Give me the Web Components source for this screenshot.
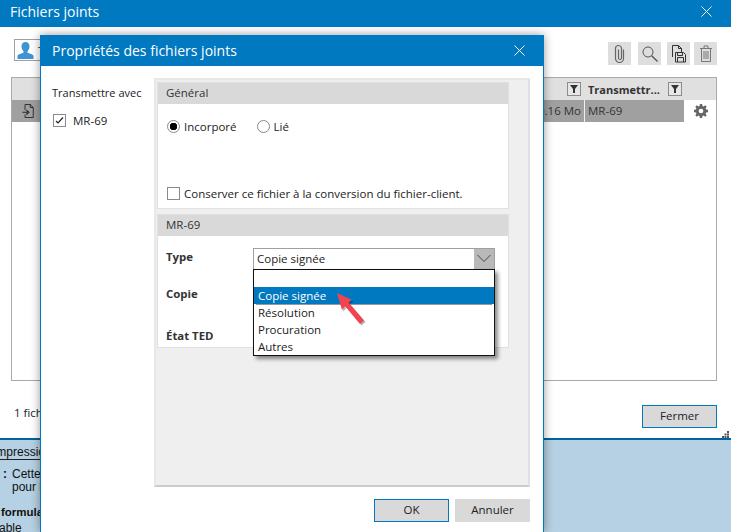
<!DOCTYPE html>
<html lang="fr">
<head>
<meta charset="utf-8">
<title>Fichiers joints</title>
<style>
html, body { margin: 0; height: 100%; }
body {
    position: relative;
    width: 731px;
    height: 532px;
    overflow: hidden;
    background: #b6d1e3;
    font-family: "Open Sans", "Noto Sans", sans-serif;
    font-size: 11.5px;
    color: #222;
}
</style>
</head>
<body>
<back-page></back-page>
<files-window></files-window>
<props-dialog></props-dialog>

<script>
const html = (strings, ...values) => String.raw({ raw: strings }, ...values)

const closeIcon = html`<svg width="11" height="11" viewBox="0 0 11 11"><path d="M.5.5l10 10M10.500.5l-10 10" stroke="#fff" stroke-width="1" fill="none"/></svg>`
const funnel = html`<svg width="8" height="8" viewBox="0 0 8 8"><path d="M0 0h8L5 4v4H3V4z" fill="#333"/></svg>`

function define(name, markup) {
    customElements.define(name, class extends HTMLElement {
        constructor() {
            super()
            const template = document.createElement('template')
            template.innerHTML = markup
            this.attachShadow({ mode: 'open' }).append(template.content.cloneNode(true))
        }
    })
}

// page that lies behind the two windows, only its left strip is visible
define('back-page', html`
    <style>
    :host { position: absolute; left: 0; top: 440px; width: 731px; height: 92px; overflow: hidden;
        font-family: "Liberation Sans", Arial, sans-serif; font-size: 12px; color: #111; }
    .wrap { margin-left: -13px; display: flex; flex-direction: column; }
    .head { height: 19px; line-height: 24px; border-bottom: 1px solid #222; width: 60px; padding-left: 6px; white-space: nowrap; overflow: hidden; }
    .note { display: flex; margin-top: 8px; line-height: 13px; padding-left: 16px; }
    .note b { width: 9px; }
    .bold { font-weight: bold; margin-top: 10px; padding-left: 14px; font-size: 11.5px; line-height: 16px; }
    .last { margin-left: -20px; margin-top: 2px; line-height: 13px; }
    </style>
    <div class="wrap">
        <div class="head">Impression</div>
        <div class="note"><b>:</b><span>Cette<br>pour l</span></div>
        <div class="bold">formulaire</div>
        <div class="last">Modifiable</div>
    </div>
`)

define('flat-button', html`
    <style>
    :host { display: block; box-sizing: border-box; width: 75px; height: 23px; background: #d9d9d9;
        border: 1px solid #d9d9d9; text-align: center; line-height: 20px; font-size: 11.5px; color: #222; }
    :host([primary]) { border-color: #0079c1; }
    </style>
    <slot></slot>
`)

define('tool-button', html`
    <style>
    :host { display: flex; width: 23px; height: 23px; background: #dedede; align-items: center; justify-content: center; }
    </style>
    <slot></slot>
`)

define('check-box', html`
    <style>
    :host { display: flex; align-items: center; gap: 7px; font-size: 11.5px; }
    i { box-sizing: border-box; width: 13px; height: 13px; border: 1px solid #8a8a8a; display: block; background: #fff; flex: none; }
    svg { display: none; margin: 1px; }
    :host([checked]) svg { display: block; }
    </style>
    <i><svg width="9" height="9" viewBox="0 0 9 9"><path d="M1 5l2 2 5-5.500" fill="none" stroke="#222" stroke-width="1.200"/></svg></i>
    <slot></slot>
`)

define('radio-button', html`
    <style>
    :host { display: flex; align-items: center; gap: 4px; font-size: 11.5px; }
    i { box-sizing: border-box; width: 13px; height: 13px; border: 1px solid #8a8a8a; border-radius: 50%; background: #fff; display: block; flex: none; }
    :host([checked]) i { background: radial-gradient(circle, #000 0 3.500px, #fff 4px); }
    </style>
    <i></i>
    <slot></slot>
`)

define('prop-section', html`
    <style>
    :host { display: block; background: #fff; box-shadow: 0 0 0 1px #e0e0e0; }
    h3 { margin: 0; height: 21px; background: #d9d9d9; font-weight: 400; font-size: 11.5px; line-height: 19px; padding-left: 8px; color: #333; }
    </style>
    <h3><slot name="title"></slot></h3>
    <slot></slot>
`)

define('combo-list', html`
    <style>
    :host { display: block; position: relative; box-sizing: border-box; height: 22px; border: 1px solid #a0a0a0; background: #fff; font-size: 11.5px; line-height: 19px; }
    .val { padding-left: 3px; }
    .btn { position: absolute; right: 0; top: 0; bottom: 0; width: 20px; background: #b9b9b9; }
    .btn svg { display: block; margin: 5px 0 0 3px; }
    ul { position: absolute; left: -1px; right: -1px; top: 20px; margin: 0; padding: 0; list-style: none; background: #fff;
        border: 1px solid #111; box-shadow: 3px 3px 4px rgba(0,0,0,.45); z-index: 2; }
    li { height: 17px; line-height: 15px; padding-left: 4px; }
    li:last-child { height: 16px; }
    li.on { background: #0079c1; color: #fff; line-height: 17px; }
    li.rule { height: 1px; margin: 0 2px; padding: 0; background: #999; }
    .arrow { position: absolute; left: 80px; top: 40px; z-index: 3; }
    </style>
    <div class="val">Copie signée</div>
    <div class="btn"><svg width="14" height="9" viewBox="0 0 14 9"><path d="M.5 1L7 7.500 13.500 1" fill="none" stroke="#444"/></svg></div>
    <ul>
        <li></li>
        <li class="on">Copie signée</li>
        <li class="rule"></li>
        <li>Résolution</li>
        <li>Procuration</li>
        <li>Autres</li>
    </ul>
    <svg class="arrow" width="34" height="38" viewBox="0 0 34 38">
        <path d="M3 4L18 11 14.500 13.500 30 31.500 26 35 11 17 8 21z" fill="#000" opacity=".3" transform="translate(1.500 1.500)"/>
        <path d="M3 4L18 11 14.500 13.500 30 31.500 26 35 11 17 8 21z" fill="#f4434f"/>
    </svg>
`)

define('props-dialog', html`
    <style>
    :host { position: absolute; left: 40px; top: 35px; width: 504px; height: 497px; box-sizing: border-box;
        display: flex; flex-direction: column; background: #fff; border: 1px solid #0079c1; border-bottom: 0;
        box-shadow: 0 0 9px rgba(0,0,0,.4); }
    header { flex: none; box-sizing: border-box; height: 30px; background: #0079c1; color: #fff; display: flex; align-items: center; justify-content: space-between;
        padding: 0 18px 2px 11px; font-size: 14px; }
    main { flex: 1; display: flex; min-height: 0; padding: 12px 13px 0 0; }
    aside { box-sizing: border-box; width: 113px; padding: 7px 0 0 11px; flex: none; font-size: 11px; white-space: nowrap; }
    aside p { margin: 0 0 12px; line-height: 16px; }
    aside check-box { margin-left: 1px; }
    .panel { flex: 1; box-sizing: border-box; height: 409px; background: #efefef; border: 2px solid #e8e8e8; border-bottom-color: #cccccc; border-right-color: #e0e0e0;
        padding: 3px 20px 0 2px; display: flex; flex-direction: column; gap: 7px; }
    .general { height: 125px; box-sizing: border-box; }
    .g-body { height: 104px; box-sizing: border-box; padding: 15px 8px 0 9px; display: flex; flex-direction: column; }
    .radios { display: flex; gap: 20px; }
    .keep-wrap { margin-top: auto; padding-bottom: 7px; }
    .keep { gap: 4px; }
    .detail { height: 132px; }
    .grid { display: grid; grid-template-columns: 87px 242px; padding: 12px 0 0 8px; grid-template-rows: 37px 42px 20px; }
    label { font-weight: 700; font-size: 11.400px; color: #333; line-height: 18px; }
    footer { flex: none; height: 45px; display: flex; justify-content: flex-end; gap: 6px; padding: 12px 13px 0 0; box-sizing: border-box; }
    </style>
    <header><span>Propriétés des fichiers joints</span>${closeIcon}</header>
    <main>
        <aside>
            <p>Transmettre avec</p>
            <check-box checked>MR-69</check-box>
        </aside>
        <div class="panel">
            <prop-section class="general">
                <span slot="title">Général</span>
                <div class="g-body">
                    <div class="radios">
                        <radio-button checked>Incorporé</radio-button>
                        <radio-button>Lié</radio-button>
                    </div>
                    <div class="keep-wrap"><check-box class="keep">Conserver ce fichier à la conversion du fichier-client.</check-box></div>
                </div>
            </prop-section>
            <prop-section class="detail">
                <span slot="title">MR-69</span>
                <div class="grid">
                    <label>Type</label><combo-list></combo-list>
                    <label>Copie</label><span></span>
                    <label>État TED</label><span></span>
                </div>
            </prop-section>
        </div>
    </main>
    <footer>
        <flat-button primary>OK</flat-button>
        <flat-button>Annuler</flat-button>
    </footer>
`)

define('files-window', html`
    <style>
    :host { position: absolute; left: 0; top: 0; width: 731px; height: 440px; box-sizing: border-box; background: #fff;
        border-bottom: 2px solid #0062a0; display: flex; flex-direction: column; }
    header { flex: none; box-sizing: border-box; height: 27px; background: #0079c1; color: #fff; display: flex; align-items: center; justify-content: space-between;
        padding: 0 19px 4px 10px; font-size: 14px; }
    .tools { flex: none; height: 50px; display: flex; align-items: center; padding: 0 14px; }
    .user { box-sizing: border-box; width: 27px; height: 22px; border: 1px solid #a0a0a0; margin-top: -4px; display: flex; align-items: center; gap: 4px; padding-left: 2px; white-space: nowrap; overflow: hidden; flex: none; }
    .user svg { flex: none; }
    .user span { flex: none; width: 3px; overflow: hidden; }
    .tools tool-button { margin-left: 7px; margin-top: 3px; }
    .tools tool-button:nth-of-type(1) { margin-left: auto; }
    .tools tool-button:nth-of-type(3) { margin-left: 6px; }
    .tools tool-button:nth-of-type(4) { margin-left: 4px; }
    .table { flex: none; box-sizing: border-box; margin: 0 14px 0 11px; height: 304px; border: 1px solid #a9a9a9; }
    .row { display: grid; grid-template-columns: 23px 1fr 100px 32px; height: 22px; line-height: 21px; }
    .row.head { background: #e0e0e0; font-weight: 700; font-size: 11px; }
    .row.sel { background: #a0a0a0; color: #333; }
    .row > div { display: flex; align-items: center; overflow: hidden; min-width: 0; }
    .size { justify-content: flex-end; padding-right: 3px; padding-bottom: 2px; }
    .row.sel .tr { border-left: 1px solid #eee; padding-left: 3px; padding-bottom: 2px; }
    .row.head .tr { padding-left: 4px; justify-content: space-between; padding-right: 2px; color: #333; white-space: nowrap; }
    .gear { background: #fff; justify-content: center; padding-left: 1px; }
    .filter { box-sizing: border-box; width: 14px; height: 14px; border: 1px solid #8c8c8c; background: #e6e6e6; display: block; flex: none; }
    .filter svg { display: block; margin: 2px; }
    .filter-cell { justify-content: flex-end; padding-right: 3px; }
    .bottom { flex: 1; position: relative; display: flex; padding: 24px 14px 0 14px; justify-content: space-between; }
    .count { line-height: 16px; }
    .grip { position: absolute; right: 2px; bottom: 0; display: block; }
    </style>
    <header><span>Fichiers joints</span>${closeIcon}</header>
    <div class="tools">
        <div class="user">
            <svg width="17" height="17" viewBox="0 0 17 17"><path d="M8.500 0c2.600 0 4 2 4 4.500 0 2-.9 3.700-2 4.700v1.500c2 .9 5.500 1.300 6 3.300v3H.5v-3c.5-2 4-2.400 6-3.300V9.200c-1.100-1-2-2.700-2-4.700C4.500 2 5.900 0 8.500 0z" fill="#3d95d1"/></svg>
            <span>T</span>
        </div>
        <tool-button>
            <svg width="11" height="19" viewBox="0 0 11 19"><path d="M8.500 5v9a4 4 0 0 1-8 0V4a3 3 0 0 1 6 0v9.500a1.500 1.500 0 0 1-3 0V5" transform="translate(1 .5)" fill="none" stroke="#666" stroke-width="1.200"/></svg>
        </tool-button>
        <tool-button>
            <svg width="18" height="18" viewBox="0 0 18 18"><circle cx="7" cy="7" r="5" fill="none" stroke="#555" stroke-width="1"/><path d="M10.700 10.700L16.500 16.500" stroke="#555" stroke-width="1.400"/></svg>
        </tool-button>
        <tool-button>
            <svg width="15" height="18" viewBox="0 0 15 18"><path d="M1.500 12V.5h6l3 3V7" fill="none" stroke="#333"/><path d="M7.500.5v3h3" fill="none" stroke="#333"/><path d="M4.500 7.500h8l2 2v7.500h-10z" fill="#dedede" stroke="#333"/><path d="M6.500 7.500v3h5v-3M6.500 17v-4.500h6V17" fill="none" stroke="#333"/></svg>
        </tool-button>
        <tool-button>
            <svg width="14" height="17" viewBox="0 0 14 17"><path d="M1 3.500h12M5 3.500V1h4v2.500M2.500 3.500v13h9v-13M5 6v8M7 6v8M9 6v8" fill="none" stroke="#777" stroke-width="1"/></svg>
        </tool-button>
    </div>
    <div class="table">
        <div class="row head">
            <div></div>
            <div class="filter-cell"><i class="filter">${funnel}</i></div>
            <div class="tr">Transmettr...<i class="filter">${funnel}</i></div>
            <div></div>
        </div>
        <div class="row sel">
            <div style="padding-left:10px">
                <svg width="15" height="16" viewBox="0 0 15 16"><path d="M3.500 7V.5h6l3.500 3.500v11.500H3.500V12" fill="none" stroke="#222"/><path d="M9.500.5V4H13" fill="none" stroke="#222"/><path d="M.5 9.500h6M5 7l3 2.500L5 12" fill="none" stroke="#222" stroke-width="1.300"/></svg>
            </div>
            <div class="size">0.16 Mo</div>
            <div class="tr">MR-69</div>
            <div class="gear">
                <svg width="14" height="14" viewBox="0 0 16 16"><path fill-rule="evenodd" fill="#666" d="M6.700 0h2.600l.4 2.200 1.300.6L12.900 1.500l1.600 1.700-1.300 1.900.6 1.300 2.200.3v2.600l-2.200.4-.6 1.300 1.300 1.900-1.700 1.600-1.900-1.300-1.300.6-.3 2.200H6.700l-.4-2.200-1.300-.6-1.900 1.300-1.600-1.700 1.300-1.900-.6-1.300L0 9.300V6.700l2.200-.4.600-1.300-1.300-1.900L3.200 1.500l1.900 1.300 1.300-.6zM8 5.300a2.700 2.700 0 1 0 0 5.400 2.700 2.700 0 0 0 0-5.400z"/></svg>
            </div>
        </div>
    </div>
    <div class="bottom">
        <span class="count">1 fichier</span>
        <flat-button primary>Fermer</flat-button>
        <svg class="grip" width="7" height="7" viewBox="0 0 7 7"><path d="M5 0h2v2H5zM2.500 2.500h2v2h-2zM5 2.500h2v2H5zM0 5h2v2H0zM2.500 5h2v2h-2zM5 5h2v2H5z" fill="#555"/></svg>
    </div>
`)
</script>
</body>
</html>
